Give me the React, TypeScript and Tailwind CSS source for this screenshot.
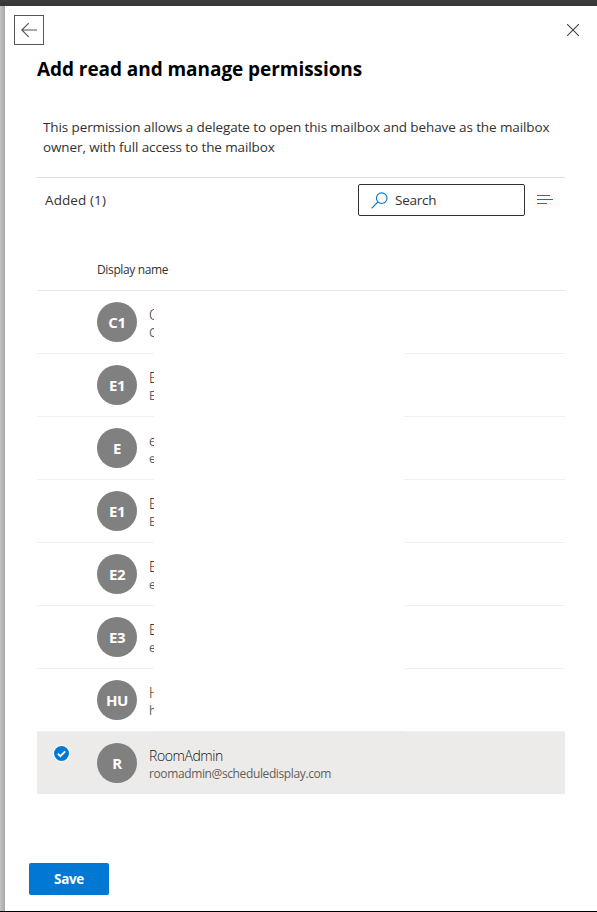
const people = [
  { initials: 'C1', name: 'C', mail: 'C' },
  { initials: 'E1', name: 'E', mail: 'E' },
  { initials: 'E', name: 'e', mail: 'e' },
  { initials: 'E1', name: 'E', mail: 'E' },
  { initials: 'E2', name: 'E', mail: 'e' },
  { initials: 'E3', name: 'E', mail: 'e' },
  { initials: 'HU', name: 'H', mail: 'h' },
];

function Avatar({ text }: { text: string }) {
  return (
    <div className="flex h-10 w-10 shrink-0 items-center justify-center rounded-full bg-[#808080] text-[15px] leading-5 font-bold tracking-[-0.4px] text-white">
      {text}
    </div>
  );
}

function PersonText({ name, mail }: { name: string; mail: string }) {
  return (
    <>
      <div className="text-[14px] leading-[18px] font-light tracking-[-0.42px] text-[#111]">{name}</div>
      <div className="text-[12px] leading-[17px] tracking-[-0.38px] text-[#605e5c]">{mail}</div>
    </>
  );
}

function PersonRow({ initials, name, mail }: { initials: string; name: string; mail: string }) {
  return (
    <div className="flex h-[63px] justify-between">
      <div className="flex w-[117px] overflow-hidden border-b border-[#f0f0f0] pt-[11px] pl-[60px]">
        <Avatar text={initials} />
        <div className="ml-3 w-[5px] shrink-0 overflow-hidden pt-[4px]">
          <PersonText name={name} mail={mail} />
        </div>
      </div>
      <div className="w-[161px] border-b border-[#f0f0f0]" />
    </div>
  );
}

export default function App() {
  return (
    <div className="flex h-[912px] w-[597px] flex-col overflow-hidden bg-white font-['Open_Sans','Noto_Sans',sans-serif] text-[#323130]">
      <div className="h-[6px] shrink-0 bg-gradient-to-b from-[#3e3d3b] to-[#383735]" />
      <div className="flex h-[905px] shrink-0">
        <div className="w-[5px] shrink-0 bg-gradient-to-r from-[#c4c4c4] to-[#a8a8a8]" />
        <div className="flex w-[592px] flex-col">
          <div className="flex h-[39px] items-start justify-between pt-[9px] pr-[18px] pl-[9px]">
            <button className="flex h-[30px] w-[30px] items-center justify-center border border-[#555]">
              <svg width="16" height="16" viewBox="0 0 16 16" fill="none" stroke="#555" strokeWidth="1.2">
                <path d="M16 8H.8M7.7 1.1L.8 8l6.900 6.900" />
              </svg>
            </button>
            <button className="mt-[9px] h-[12px] w-[12px]">
              <svg width="12" height="12" viewBox="0 0 12 12" fill="none" stroke="#444" strokeWidth="1.1">
                <path d="M0 0l12 12M12 0L0 12" />
              </svg>
            </button>
          </div>
          <div className="pr-8 pl-8">
            <h1 className="mt-[10px] h-[28px] text-[19px] leading-[28px] font-bold tracking-[-0.06px] whitespace-nowrap text-black">Add read and manage permissions</h1>
            <p className="mt-[34px] h-[40px] pl-[6px] text-[13.5px] leading-5 tracking-[-0.11px] whitespace-nowrap">
              This permission allows a delegate to open this mailbox and behave as the mailbox
              <br />
              owner, with full access to the mailbox
            </p>
            <div className="mt-[20px] flex h-[83px] w-[528px] items-start border-t border-[#e1dfdd] pt-[6px]">
              <div className="w-[321px] pl-2 text-[13.5px] leading-[32px] tracking-[0.1px]">Added (1)</div>
              <div className="flex h-8 w-[167px] items-center rounded-[2px] border border-[#323130] pl-3">
                <svg width="17" height="17" viewBox="0 0 17 17" fill="none" stroke="#0078d4" strokeWidth="1.1">
                  <circle cx="10.700" cy="6.200" r="5.300" />
                  <path d="M6.900 10L.6 16.300" />
                </svg>
                <span className="ml-[7px] text-[13.5px] tracking-[-0.25px]">Search</span>
              </div>
              <svg className="mt-[10px] ml-3" width="16" height="11" viewBox="0 0 16 11" fill="#0078d4">
                <path d="M0 1h13v1H0zM0 5h16v1H0zM0 9h10v1H0z" />
              </svg>
            </div>
            <div className="h-[31px] w-[528px] border-b border-[#e6e6e6] pl-[60px] text-[12px] leading-[20px] tracking-[-0.36px]">Display name</div>
            <div className="w-[528px]">
              {people.map((p, i) => (
                <PersonRow key={i} {...p} />
              ))}
              <div className="-mt-px flex h-[63px] bg-[#edebe9] pt-[12px]">
                <div className="w-[60px] pt-[2px] pl-[15.5px]">
                  <svg width="17" height="17" viewBox="0 0 17 17">
                    <circle cx="8.500" cy="8.500" r="8.500" fill="#fff" />
                    <circle cx="8.500" cy="8.500" r="7.500" fill="#0078d4" />
                    <path d="M4.800 8.700l2.500 2.500 4.900-4.900" fill="none" stroke="#fff" strokeWidth="1.900" />
                  </svg>
                </div>
                <Avatar text="R" />
                <div className="ml-3 pt-[4px]">
                  <PersonText name="RoomAdmin" mail="roomadmin@scheduledisplay.com" />
                </div>
              </div>
            </div>
          </div>
          <button className="mt-[69px] ml-6 h-8 w-20 rounded-[2px] bg-[#0078d4] text-[13.5px] leading-8 font-bold tracking-[-0.35px] text-white">Save</button>
        </div>
      </div>
      <div className="h-px shrink-0 bg-black" />
    </div>
  );
}
